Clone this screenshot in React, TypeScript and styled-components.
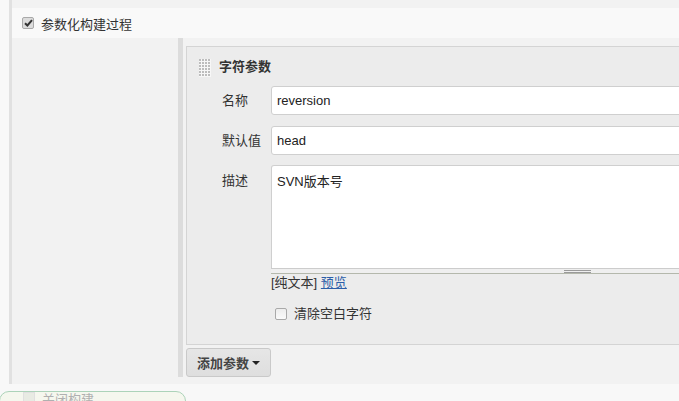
import React from "react";
import styled, { createGlobalStyle } from "styled-components";

const Global = createGlobalStyle`
  html, body { margin: 0; padding: 0; }
  body {
    background: #f8f8f8;
    font-family: "Liberation Sans", "Noto Sans CJK SC", Arial, sans-serif;
    font-size: 13px;
    color: #333;
    overflow: hidden;
  }
`;

const Page = styled.div`
  width: 679px;
  height: 401px;
  overflow: hidden;
  background: #f8f8f8;
`;

const Section = styled.div`
  margin-left: 9px;
  border-left: 3px solid #e1e1e1;
  background: #f2f2f2;
  padding-top: 8px;
  padding-bottom: 7px;
`;

const OptionRow = styled.div`
  height: 30px;
  background: #f9f9f9;
  display: flex;
  align-items: center;
  padding-left: 10px;
  gap: 7px;
`;

const Box = styled.span<{ $checked?: boolean }>`
  display: inline-flex;
  align-items: center;
  justify-content: center;
  box-sizing: border-box;
  width: 12px;
  height: 12px;
  border: 1px solid #a9a9a9;
  border-radius: 2px;
  background: ${(p) => (p.$checked ? "#dcdcdc" : "linear-gradient(#ededed, #fafafa)")};
  flex: none;
`;

const Check = ({ checked }: { checked?: boolean }) => (
  <Box $checked={checked}>
    {checked && (
      <svg width="9" height="8" viewBox="0 0 9 8">
        <path d="M1 4.2 L3.4 6.5 L8 1.2" stroke="#333" strokeWidth="2" fill="none" />
      </svg>
    )}
  </Box>
);

const OptionLabel = styled.span`
  font-size: 13px;
  color: #333;
`;

const Nested = styled.div`
  margin-left: 166px;
  border-left: 5px solid #dcdcdc;
  padding-left: 3px;
  padding-top: 8px;
`;

const ParamBox = styled.div`
  border: 1px solid #d4d4d4;
  background: #ececec;
  margin-right: -40px;
  padding-top: 12px;
  padding-bottom: 22px;
`;

const BoxHeader = styled.div`
  display: flex;
  align-items: center;
  gap: 8px;
  height: 18px;
  line-height: 16px;
  padding-left: 12px;
  margin-bottom: 9px;
`;

const Title = styled.span`
  font-weight: bold;
  font-size: 13px;
  color: #333;
  margin-top: -2px;
`;

const Handle = () => (
  <svg width="12" height="18" viewBox="0 0 12 18">
    <rect width="12" height="18" fill="#f7f7f7" />
    {Array.from({ length: 6 }).map((_, r) =>
      Array.from({ length: 4 }).map((_, c) => (
        <rect key={`${r}-${c}`} x={c * 3} y={r * 3} width="2" height="2" fill="#bdbdbd" />
      ))
    )}
  </svg>
);

const Row = styled.div<{ $top?: boolean; $gap?: number }>`
  display: grid;
  grid-template-columns: 49px 1fr;
  align-items: ${(p) => (p.$top ? "start" : "center")};
  padding-left: 35px;
  margin-bottom: ${(p) => p.$gap ?? 11}px;
`;

const FieldLabel = styled.label<{ $pad?: number }>`
  font-size: 13px;
  line-height: 16px;
  color: #333;
  padding-top: ${(p) => p.$pad ?? 0}px;
`;

const Input = styled.div`
  box-sizing: border-box;
  height: 29px;
  border: 1px solid #cfcfcf;
  border-radius: 3px;
  background: #fff;
  display: flex;
  align-items: center;
  padding-left: 5px;
  font-size: 13px;
  color: #222;
`;

const AreaWrap = styled.div`
  display: flex;
  flex-direction: column;
`;

const TextArea = styled.div`
  box-sizing: border-box;
  height: 103px;
  border: 1px solid #cfcfcf;
  border-bottom: none;
  border-radius: 3px 3px 0 0;
  background: #fff;
  padding: 8px 5px;
  font-size: 13px;
  line-height: 16px;
  color: #222;
`;

const Grip = styled.div`
  box-sizing: border-box;
  height: 6px;
  border-top: 1px solid #cccccc;
  border-bottom: 1px solid #b4b8ac;
  background: #efefef;
  position: relative;
  &::after {
    content: "";
    position: absolute;
    left: 293px;
    top: 1px;
    width: 27px;
    height: 1px;
    border-top: 1px solid #9a9a9a;
    border-bottom: 1px solid #9a9a9a;
  }
`;

const Syntax = styled.div`
  margin-top: 1px;
  font-size: 13px;
  line-height: 16px;
  color: #333;
`;

const Link = styled.a`
  color: #2c5ea8;
  text-decoration: underline;
`;

const CheckRow = styled.div`
  display: flex;
  align-items: center;
  gap: 7px;
  height: 16px;
  line-height: 16px;
  margin-top: 15px;
  padding-left: 4px;
  font-size: 13px;
  color: #333;
`;

const AddButton = styled.button`
  margin-top: 3px;
  box-sizing: border-box;
  width: 85px;
  height: 29px;
  border: 1px solid #c9c9c9;
  border-radius: 3px;
  background: linear-gradient(#e6e6e6, #dedede);
  display: flex;
  align-items: center;
  justify-content: space-between;
  padding: 0 10px 0 10px;
  font-family: inherit;
  font-size: 13px;
  font-weight: bold;
  color: #444;
`;

const Caret = styled.span`
  width: 0;
  height: 0;
  border-left: 4px solid transparent;
  border-right: 4px solid transparent;
  border-top: 4px solid #222;
  margin-top: 1px;
`;

const Footer = styled.div`
  margin-top: 7px;
  margin-left: -1px;
  width: 187px;
  height: 30px;
  box-sizing: border-box;
  border: 1px solid #acd3b9;
  border-radius: 10px;
  background: #f5f7ee;
  display: flex;
  align-items: flex-start;
  gap: 7px;
  padding-left: 23px;
  padding-top: 0;
  line-height: 16px;
  font-size: 13px;
  color: #b0b0b0;
`;

const FooterBox = styled.span`
  width: 12px;
  height: 14px;
  background: #e8ebe3;
  border: 1px solid #e0e0e0;
  box-sizing: border-box;
`;

export default function App() {
  return (
    <Page>
      <Global />
      <Section>
        <OptionRow>
          <Check checked />
          <OptionLabel>参数化构建过程</OptionLabel>
        </OptionRow>
        <Nested>
          <ParamBox>
            <BoxHeader>
              <Handle />
              <Title>字符参数</Title>
            </BoxHeader>
            <Row>
              <FieldLabel>名称</FieldLabel>
              <Input>reversion</Input>
            </Row>
            <Row $gap={10}>
              <FieldLabel>默认值</FieldLabel>
              <Input>head</Input>
            </Row>
            <Row $top $gap={0}>
              <FieldLabel $pad={8}>描述</FieldLabel>
              <AreaWrap>
                <TextArea>SVN版本号</TextArea>
                <Grip />
                <Syntax>
                  [纯文本] <Link>预览</Link>
                </Syntax>
                <CheckRow>
                  <Check />
                  <span>清除空白字符</span>
                </CheckRow>
              </AreaWrap>
            </Row>
          </ParamBox>
          <AddButton>
            <span>添加参数</span>
            <Caret />
          </AddButton>
        </Nested>
      </Section>
      <Footer>
        <FooterBox />
        <span>关闭构建</span>
      </Footer>
    </Page>
  );
}
